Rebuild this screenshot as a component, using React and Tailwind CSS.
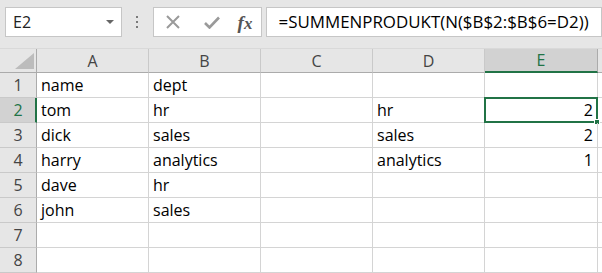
import React from 'react'

const cols = ['A', 'B', 'C', 'D', 'E']

const rows = [
  ['name', 'dept', '', '', ''],
  ['tom', 'hr', '', 'hr', '2'],
  ['dick', 'sales', '', 'sales', '2'],
  ['harry', 'analytics', '', 'analytics', '1'],
  ['dave', 'hr', '', '', ''],
  ['john', 'sales', '', '', ''],
  ['', '', '', '', ''],
  ['', '', '', '', ''],
]

const FormulaBar = () => (
  <div className="h-[49px] bg-[#e6e6e6] border-b border-[#d9d9d9] flex items-start pt-[7px]">
    <div className="ml-[5px] w-[118px] h-[30px] bg-white border border-[#c6c6c6] flex items-center justify-between pl-[7px] pr-[7px]">
      <span className="text-[16px] text-[#222]">E2</span>
      <svg width="8" height="4" viewBox="0 0 8 4">
        <path d="M0 0 L8 0 L4 4 Z" fill="#666" />
      </svg>
    </div>
    <div className="w-[31px] h-[30px] flex flex-col items-center justify-center gap-[3px]">
      <span className="w-[2px] h-[2px] bg-[#7a7a7a]" />
      <span className="w-[2px] h-[2px] bg-[#7a7a7a]" />
      <span className="w-[2px] h-[2px] bg-[#7a7a7a]" />
    </div>
    <div className="w-[110px] h-[30px] bg-white border border-[#c6c6c6] flex items-center pl-[12px]">
      <svg width="14" height="14" viewBox="0 0 14 14">
        <path d="M1 1 L13 13 M13 1 L1 13" stroke="#9a9a9a" strokeWidth="2" />
      </svg>
      <svg width="16" height="13" viewBox="0 0 16 13" className="ml-[24px]">
        <path d="M1 7 L5.5 11.5 L15 1.5" stroke="#9a9a9a" strokeWidth="2.6" fill="none" />
      </svg>
      <span className="ml-[18px] text-[19px] leading-none italic font-bold text-[#555]" style={{ fontFamily: '"Liberation Serif", "DejaVu Serif", serif' }}>
        f<span className="text-[17px]">x</span>
      </span>
    </div>
    <div className="ml-[4px] w-[340px] h-[30px] bg-white border border-[#c6c6c6] flex items-center pl-[12px] whitespace-nowrap">
      <span className="text-[16.9px] text-black">=SUMMENPRODUKT(N($B$2:$B$6=D2))</span>
    </div>
  </div>
)

export default function App() {
  return (
    <div
      className="w-[602px] h-[273px] overflow-hidden bg-white"
      style={{ fontFamily: '"Open Sans", "Noto Sans", sans-serif' }}
    >
      <FormulaBar />
      <div className="grid grid-cols-[37px_112px_112px_112px_112px_113px_1fr]">
        <div className="h-[24px] bg-[#e6e6e6] border-r border-b border-[#ababab] relative">
          <svg width="19" height="16" viewBox="0 0 19 16" className="absolute left-[15px] top-[4px]">
            <path d="M19 0 L19 16 L0 16 Z" fill="#bcbcbc" />
          </svg>
        </div>
        {cols.map((c) => (
          <div
            key={c}
            className={
              c === 'E'
                ? 'h-[24px] bg-[#d2d2d2] border-r border-[#ababab] border-b-2 border-b-[#217346] text-[#217346] flex items-center justify-center text-[16px]'
                : 'h-[24px] bg-[#e6e6e6] border-r border-[#c9c9c9] border-b border-b-[#ababab] text-[#444] flex items-center justify-center text-[16px]'
            }
          >
            {c}
          </div>
        ))}
        <div className="h-[24px] bg-[#e6e6e6] border-b border-[#ababab]" />

        {rows.map((r, i) => (
          <React.Fragment key={i}>
            <div
              className={
                i === 1
                  ? 'h-[25px] bg-[#d2d2d2] border-b border-[#c9c9c9] border-r-2 border-r-[#217346] text-[#217346] flex items-center justify-center text-[16px] pl-[1px]'
                  : 'h-[25px] bg-[#e6e6e6] border-b border-[#c9c9c9] border-r border-r-[#ababab] text-[#444] flex items-center justify-center text-[16px]'
              }
            >
              {i + 1}
            </div>
            {r.map((v, j) => (
              <div
                key={j}
                className={
                  'h-[25px] border-r border-b border-[#d4d4d4] flex items-center text-[16px] text-black whitespace-nowrap relative ' +
                  (j === 4 ? 'justify-end pr-[4px]' : 'pl-[4px]')
                }
              >
                {v}
                {i === 1 && j === 4 && (
                  <div className="absolute -left-px -top-px -right-px -bottom-px border-2 border-[#217346]">
                    <div className="absolute -right-[4px] -bottom-[4px] w-[6px] h-[6px] bg-[#217346] border border-white" />
                  </div>
                )}
              </div>
            ))}
            <div className="h-[25px] border-b border-[#d4d4d4]" />
          </React.Fragment>
        ))}
      </div>
    </div>
  )
}
